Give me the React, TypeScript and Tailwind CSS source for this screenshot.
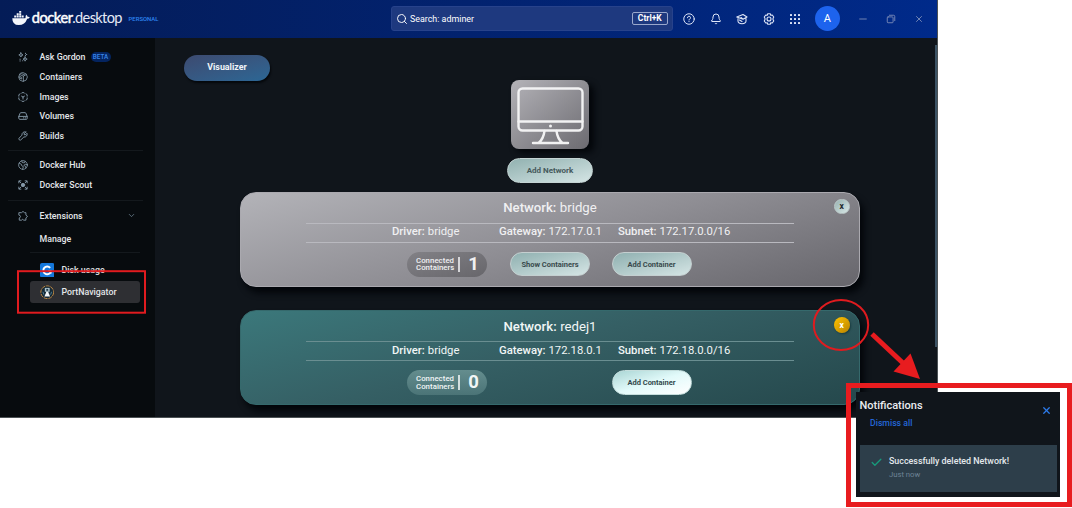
import React from 'react';
import { Search, Bell, ChevronDown, Check, X } from 'lucide-react';

function Glyph({ children, className = 'size-[10px] text-[#8397a6]', w = 2 }: { children: React.ReactNode; className?: string; w?: number }) {
  return (
    <svg viewBox="0 0 24 24" fill="none" stroke="currentColor" strokeWidth={w} strokeLinecap="round" strokeLinejoin="round" className={className}>
      {children}
    </svg>
  );
}

const icons = {
  gordon: (
    <Glyph w={2.2}>
      <path d="M7 2l1.500 3.500L12 7 8.500 8.500 7 12 5.500 8.500 2 7l3.500-1.500z" />
      <path d="M17 12l1.400 3.600L22 17l-3.600 1.400L17 22l-1.400-3.600L12 17l3.600-1.400z" />
      <path d="M18 3v1M18 8v1M21 6h-1M5 17v1M5 21v1M11 21h.5" />
    </Glyph>
  ),
  containers: (
    <Glyph>
      <path d="M12 1.500l7.500 3L22.500 12l-3 7.500-7.500 3-7.500-3-3-7.500 3-7.500z" />
      <path d="M4 6l9 4 7-4M13 10v12M5 11l4 2v4l-4-2zM9 4l7 3" />
    </Glyph>
  ),
  images: (
    <Glyph w={2.300}>
      <path d="M9 2.500L12 1l3 1.500M19 4.500l3 2V10M22 14v3.500l-3 2M15 21.500L12 23l-3-1.500M5 19.500l-3-2V14M2 10V6.500l3-2" />
      <path d="M12 13v4M12 12l3.500-2M12 12L8.500 10" />
    </Glyph>
  ),
  volumes: (
    <Glyph w={2.300}>
      <path d="M2 13L5 5.500Q5.500 4 7 4h10q1.500 0 2 1.500L22 13v5q0 2-2 2H4q-2 0-2-2zM2 13h20M13 16.500h1M17.500 16.500h1" />
    </Glyph>
  ),
  builds: (
    <Glyph w={2.300}>
      <path d="M17 8l-1.500-1.500M18.500 2.500L15 6v3h3l3.500-3.500Q23 9 20.500 12t-6.500 2.500L6.500 21.500Q5 23 3 21t-.5-3.500L9.500 10Q9 6 12 3.500t6.500-1z" />
    </Glyph>
  ),
  hub: (
    <Glyph>
      <circle cx="12" cy="12" r="10.500" />
      <path d="M3 8l5 2 1 4 4 2-2 6M9 2l1 4 5 1 2-4M22 11l-5-1-3 3 4 2 1 4" />
    </Glyph>
  ),
  scout: (
    <Glyph w={2.200}>
      <path d="M2 7V2h5M17 2h5v5M22 17v5h-5M7 22H2v-5M3 3l4 4M21 3l-4 4M21 21l-4-4M3 21l4-4" />
      <circle cx="12" cy="12" r="4" fill="currentColor" />
    </Glyph>
  ),
  extensions: (
    <Glyph w={2.200}>
      <path d="M3 4h5.500l3.500-3 3.500 3H19v6l4 3-4 3.500V22h-6l-2-2.500L8.500 22H3v-5.500q3-.5 3-3.300T3 10z" />
    </Glyph>
  ),
};

function NavItem({ icon, label, children }: { icon: React.ReactNode; label: string; children?: React.ReactNode }) {
  return (
    <li className="flex h-[19.6px] items-center pl-[17.500px]">
      <span className="flex w-[22px] shrink-0">{icon}</span>
      <span className="pt-[1px]">{label}</span>
      {children}
    </li>
  );
}

function Sidebar() {
  return (
    <nav className="h-full w-[155px] shrink-0 bg-[#070b0e] pt-[10.200px] text-[8.8px] font-medium text-[#e4e7ea]">
      <ul>
        <NavItem icon={icons.gordon} label="Ask Gordon">
          <span className="ml-[5px] flex h-[10px] w-[20px] items-center justify-center rounded-full bg-[#04245f] text-[6.300px] font-medium text-[#3a86e8]">BETA</span>
        </NavItem>
        <NavItem icon={icons.containers} label="Containers" />
        <NavItem icon={icons.images} label="Images" />
        <NavItem icon={icons.volumes} label="Volumes" />
        <NavItem icon={icons.builds} label="Builds" />
      </ul>
      <hr className="mt-[4px] mr-[12px] mb-[5px] ml-[8px] border-[#14191d]" />
      <ul>
        <NavItem icon={icons.hub} label="Docker Hub" />
        <NavItem icon={icons.scout} label="Docker Scout" />
      </ul>
      <hr className="mt-[5px] mr-[12px] mb-[5px] ml-[8px] border-[#14191d]" />
      <ul>
        <NavItem icon={icons.extensions} label="Extensions">
          <ChevronDown className="mr-[19px] ml-auto size-[9px] text-[#6f8596]" />
        </NavItem>
      </ul>
      <div className="flex h-[27px] items-center pt-[1px] pl-[39.500px]">Manage</div>
      <hr className="mr-[15px] ml-[30px] border-[#14191d]" />
      <div className="mt-[5.500px] mr-[15px] ml-[30px]">
        <div className="flex h-[22px] items-center pl-[9.500px]">
          <svg viewBox="0 0 15 15" className="mr-[7.500px] size-[14.500px]">
            <rect width="15" height="15" rx="2" fill="#1478dc" />
            <path d="M10.500 5A4 4 0 1 0 11 9.500" fill="none" stroke="#fff" strokeWidth="2" />
            <path d="M8 7.500h4V11z" fill="#fff" />
          </svg>
          <span className="pt-[1px]">Disk usage</span>
        </div>
        <div className="flex h-[22px] items-center rounded-[3px] bg-[#2e2f33] pl-[9.500px]">
          <svg viewBox="0 0 15 15" className="mr-[7.500px] size-[14.500px]">
            <circle cx="7.500" cy="7.500" r="6.600" fill="#152936" stroke="#c48b43" strokeWidth="1" strokeDasharray="4 .8" />
            <path d="M5 3h5v4H5z" fill="#a9c3cb" />
            <path d="M6.500 4h2v2h-2z" fill="#263947" />
            <path d="M6.500 7h2l.5 1.500 1.500 3.500h-6L6 8.500z" fill="#f4f7f8" />
            <path d="M3 7l1 3M12 7l-1 3" stroke="#5f91a5" strokeWidth=".8" />
          </svg>
          <span className="pt-[1px]">PortNavigator</span>
        </div>
      </div>
    </nav>
  );
}

function Whale() {
  return (
    <svg viewBox="0 0 18 15" className="-mt-[1px] h-[15px] w-[18px] shrink-0" fill="#f3f6fc">
      <path d="M.3 7.200h12.900q.5-.2.400-1.200-.2-1 .6-2.200 1.300.8 1.400 2 1.300-.2 2.200.4-.7 1.500-2.600 1.500Q13 14 6.700 14 .3 14 .3 7.200z" />
      <path d="M2.200 4.600h2v2h-2zM4.700 4.600h2v2h-2zM7.200 4.600h2v2h-2zM9.700 4.600h2v2h-2zM4.700 2.200h2v2h-2zM7.200 2.200h2v2h-2zM7.200 0h2v1.800h-2z" />
    </svg>
  );
}

function TopBar() {
  const ic = 'size-[12px] text-[#dfe6f8]';
  return (
    <header className="flex h-[37.500px] shrink-0 items-center bg-linear-to-r from-[#041c57] via-[#02226f] to-[#002a8a] text-white">
      <div className="flex w-[390.500px] shrink-0 items-center pl-[12px]">
        <Whale />
        <span className="ml-[1.800px] flex w-[90px] shrink-0 pb-[1px] font-[Lato] text-[14.600px] leading-none">
          <span className="w-[40.500px] font-normal tracking-[-0.450px] [-webkit-text-stroke:0.45px_white]">docker</span>
          <span className="font-normal tracking-[-0.650px] text-[#e5eaf6]">.desktop</span>
        </span>
        <span className="ml-[6.800px] pt-[1px] text-[5.900px] font-medium text-[#2e86f3]">PERSONAL</span>
      </div>
      <div className="flex h-[25px] w-[282.500px] shrink-0 items-center rounded-[3px] border border-[#27428b] bg-[#1e397f] pr-[4.500px] pl-[4px] text-[8.900px]">
        <Search className="mr-[2.500px] size-[12px]" strokeWidth={1.900} />
        <span className="pt-[1px]">Search: adminer</span>
        <span className="ml-auto flex h-[13px] w-[35.500px] items-center justify-center rounded-[2px] border border-[#9aa8cc] text-[8.500px] font-bold">Ctrl+K</span>
      </div>
      <div className="flex items-center gap-[14.600px] pl-[10px]">
        <Glyph className={ic}><circle cx="12" cy="12" r="10.500" /><path d="M9 9.500a3 3 0 1 1 4 2.800q-1 .4-1 1.700M12 17v.3" /></Glyph>
        <Bell className={ic} />
        <Glyph className={ic} w={2.200}>
          <path d="M1.500 8L14 3l8 5-8 4.500z M4 11v5q0 5 8 5.500 8-.5 8-5.500v-5M14 12.500L10 9M7 14l5 3" />
        </Glyph>
        <Glyph className={ic} w={2.200}>
          <path d="M9.500 1.500h5l1 3 3-.5 3 4-1.500 3v2l1.500 3-3 4-3-.5-1 3h-5l-1-3-3 .5-3-4 1.500-3v-2L2.500 8l3-4 3 .5z" />
          <circle cx="12" cy="12" r="4" />
        </Glyph>
        <svg viewBox="0 0 12 12" className={ic} fill="currentColor">
          {[1, 5, 9].map((y) => [1, 5, 9].map((x) => <rect key={`${x}${y}`} x={x} y={y} width="2" height="2" rx=".5" />))}
        </svg>
      </div>
      <div className="ml-[13.500px] flex size-[25px] items-center justify-center rounded-full bg-[#1d63ed] text-[11px]">A</div>
      <div className="ml-[18px] flex items-center gap-[18px] text-[#8795bd]">
        <Glyph className="size-[10px]"><path d="M4 12h16" /></Glyph>
        <Glyph className="size-[10px]"><rect x="3" y="7" width="14" height="14" rx="2" /><path d="M8 3h10q3 0 3 3v10" /></Glyph>
        <X className="size-[10px]" />
      </div>
    </header>
  );
}

interface Network {
  name: string;
  gateway: string;
  subnet: string;
  count: number;
  dark: boolean;
}

function ActionButton({ label, bright }: { label: string; bright?: boolean }) {
  return (
    <button
      className={`block h-[24.500px] w-[80px] rounded-full border pt-[1px] text-[7.500px] font-bold ${
        bright
          ? 'border-[#c5dedd] bg-linear-to-br from-[#a9d5d4] via-[#e2fafa] to-white text-[#344a4d]'
          : 'border-[#c4cfd0] bg-linear-165 from-[#8fb0b0] to-[#d5e5e5] text-[#394a4c]'
      }`}
    >
      {label}
    </button>
  );
}

function NetworkCard({ name, gateway, subnet, count, dark }: Network) {
  const line = dark ? 'border-[#6a8e91]' : 'border-[#b9b9bf]';
  return (
    <section
      className={`relative h-[95px] w-[620px] rounded-[16px] border px-[65px] shadow-[4px_6px_6px_#03060a] ${
        dark
          ? 'border-[#35696c] bg-linear-165 from-[#3b787b] via-[#355f64] via-45% to-[#25484c] text-[#f1f6f6]'
          : 'border-[#aaa9af] bg-linear-165 from-[#b3b3b8] via-[#8f8e94] to-[#67666c] text-[#f0f0f2]'
      }`}
    >
      <h2 className="flex h-[30px] items-center justify-center pt-[1px] text-[13.200px] font-medium">
        Network:<span className="ml-[3.500px] font-normal">{name}</span>
      </h2>
      <dl className={`flex h-[20px] items-center border-y pl-[86px] text-[11.300px] ${line}`}>
        <div className="flex w-[107px] gap-[3px]"><dt className="font-medium">Driver:</dt><dd>bridge</dd></div>
        <div className="flex w-[119px] gap-[3px]"><dt className="font-medium">Gateway:</dt><dd>{gateway}</dd></div>
        <div className="flex gap-[3px]"><dt className="font-medium">Subnet:</dt><dd>{subnet}</dd></div>
      </dl>
      <div className="grid grid-cols-[103.500px_101.500px_80px] pt-[9px] pl-[100.500px]">
        <div className={`flex h-[25px] w-[80px] items-center rounded-full pl-[9.500px] ${dark ? 'bg-linear-to-b from-[#648d8e] to-[#4b7477]' : 'bg-linear-to-br from-[#828186] to-[#67666b]'}`}>
          <span className="w-[39.500px] shrink-0 text-[7.800px] leading-[7.300px] font-medium tracking-[0.05px]">Connected<br />Containers</span>
          <span className="ml-[2.500px] h-[15px] w-[1.500px] shrink-0 bg-current opacity-80" />
          <span className="flex-1 pl-[1px] text-center text-[18.500px] leading-none font-bold">{count}</span>
        </div>
        <div>{count > 0 && <ActionButton label="Show Containers" />}</div>
        <ActionButton label="Add Container" bright={dark} />
      </div>
      <button
        className={`absolute top-[6px] right-[9.500px] flex size-[15.500px] items-center justify-center rounded-full text-[8.500px] leading-none font-bold ${
          dark ? 'bg-linear-to-br from-[#ffc400] to-[#b98200] text-white shadow-[1px_1px_2px_#183a3e]' : 'border border-[#bdcaca] bg-linear-to-br from-[#97b2b1] to-[#d9e8e7] text-[#1e2b2e]'
        }`}
      >
        x
      </button>
    </section>
  );
}

const networks: Network[] = [
  { name: 'bridge', gateway: '172.17.0.1', subnet: '172.17.0.0/16', count: 1, dark: false },
  { name: 'redej1', gateway: '172.18.0.1', subnet: '172.18.0.0/16', count: 0, dark: true },
];

function Workspace() {
  return (
    <main className="flex min-w-0 flex-1 bg-[#10151b] pt-[16.500px] pl-[29px]">
      <button className="mt-[0.5px] h-[26px] w-[86px] shrink-0 rounded-full bg-linear-165 from-[#3c4a70] to-[#2b6795] pt-[1px] text-[8.900px] font-bold text-[#f0f4f8] shadow-[1px_2px_2px_#05080c]">Visualizer</button>
      <div className="-ml-[30px] flex w-[620px] shrink-0 flex-col items-center pt-[26px]">
        <div className="flex h-[69px] w-[78px] items-center justify-center rounded-[8px] bg-linear-to-br from-[#b4b3b8] to-[#6c6b71] shadow-[5px_4px_6px_#03060a]">
          <svg viewBox="0 0 78 69" className="h-[69px] w-[78px]" fill="none" stroke="#f2f2f3" strokeWidth="2.400" strokeLinecap="round" strokeLinejoin="round">
            <rect x="7.500" y="8.500" width="64" height="42" rx="4" />
            <path d="M7.500 41.500h64M33.500 51q-1 8-6 12M45.500 51q1 8 6 12M22 63h35" />
            <circle cx="39.500" cy="46" r="1.500" fill="#f2f2f3" stroke="none" />
          </svg>
        </div>
        <button className="mt-[9px] h-[24.500px] w-[86px] shrink-0 rounded-full border border-[#c4d3d3] bg-linear-165 from-[#91b1b0] to-[#d5e5e5] pt-[1px] text-[8px] font-bold text-[#46595b]">Add Network</button>
        <div className="mt-[9px] flex flex-col gap-[23.500px]">
          {networks.map((n) => <NetworkCard key={n.name} {...n} />)}
        </div>
      </div>
      <div className="mt-[-9px] mr-0 ml-auto h-[302px] w-[1.500px] bg-[#3c5365]" />
    </main>
  );
}

function Notifications() {
  return (
    <aside className="absolute top-[383px] left-[846px] h-[124px] w-[226px] border-[5px] border-[#e81c1f] p-[5px] pt-[3.500px]">
      <div className="h-[105px] w-[204px] bg-[#10151b] p-[3.500px] pt-[7px]">
        <div className="flex items-start justify-between pr-[4.500px]">
          <h3 className="text-[11px] leading-[14px] font-medium text-[#e9ecef]">Notifications</h3>
          <X className="mt-[6px] size-[11px] text-[#2c79e8]" strokeWidth={2.800} />
        </div>
        <p className="pl-[10.500px] text-[8.700px] leading-[14px] font-medium text-[#2467d8]">Dismiss all</p>
        <div className="mt-[15px] flex h-[47.500px] w-[197px] bg-[#2d3e4a] pt-[10px] pl-[10px]">
          <Check className="mt-[1px] size-[13px] text-[#189b7c]" strokeWidth={2.400} />
          <div className="ml-[6.500px]">
            <p className="text-[8.900px] leading-[12px] font-medium text-[#e4e9ed]">Successfully deleted Network!</p>
            <p className="mt-[3.500px] text-[7.700px] leading-[10px] text-[#6d8496]">Just now</p>
          </div>
        </div>
      </div>
    </aside>
  );
}

export default function App() {
  return (
    <div className="relative h-[508px] w-[1072px] overflow-hidden bg-white font-[Roboto,'Liberation_Sans',sans-serif] whitespace-nowrap">
      <div className="flex h-[417.500px] w-[937.500px] flex-col overflow-hidden border-r border-b border-[#4c5255] bg-[#10151b]">
        <TopBar />
        <div className="flex min-h-0 flex-1">
          <Sidebar />
          <Workspace />
        </div>
      </div>
      <Notifications />
      <svg viewBox="0 0 1072 508" className="pointer-events-none absolute inset-0 size-full" fill="none" stroke="#e01b1f">
        <rect x="18" y="271.200" width="127" height="41.500" strokeWidth="2" />
        <ellipse cx="841" cy="325" rx="27.200" ry="25" strokeWidth="2" />
        <path d="M872 334l32 30" stroke="#e81c1f" strokeWidth="5" />
        <path d="M920 379l-9.500-25.500-17 18z" fill="#e81c1f" stroke="none" />
      </svg>
    </div>
  );
}
